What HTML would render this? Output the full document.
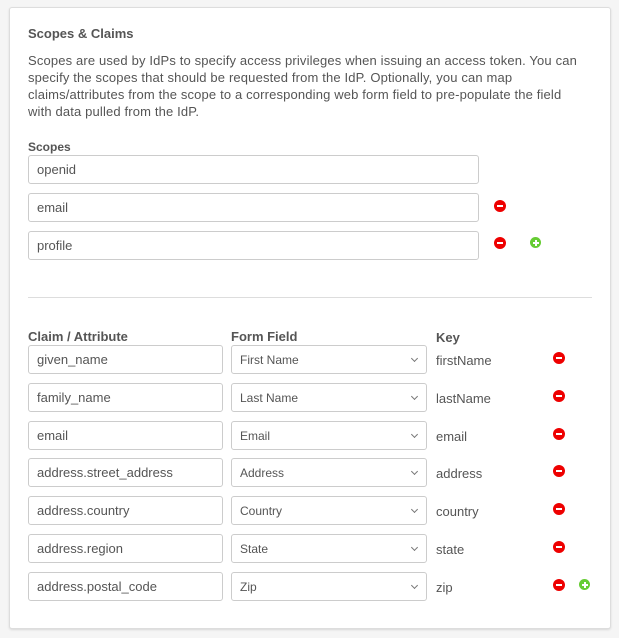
<!DOCTYPE html>
<html><head><style>
body{margin:0;width:619px;height:638px;background:#f5f5f5;font-family:"Liberation Sans",sans-serif;color:#555;position:relative;overflow:hidden}
.card{position:absolute;left:9px;top:7px;width:600px;height:620px;background:#fff;border:1px solid #ddd;border-radius:3px;box-shadow:0 1px 2px rgba(0,0,0,.12)}
.a{position:absolute}
.in{position:absolute;box-sizing:border-box;border:1px solid #ccc;border-radius:3px;height:29px;font-size:13px;line-height:27px;padding-left:8px;color:#555;background:#fff}
.sel{font-size:12px;line-height:28px}
.sel:after{content:"";position:absolute;right:9px;top:10px;width:4px;height:4px;border-right:1px solid #777;border-bottom:1px solid #777;transform:rotate(45deg)}
.h{font-weight:bold;font-size:13px;color:#555}
.m,.p{position:absolute;width:12px;height:12px;border-radius:50%}
.m{background:#e00}
.m:after{content:"";position:absolute;left:3px;top:5px;width:6px;height:2px;background:#fff}
.p{background:#6c3;width:11px;height:11px}
.p:before{content:"";position:absolute;left:2.5px;top:4.5px;width:6px;height:2px;background:#fff}
.p:after{content:"";position:absolute;left:4.5px;top:2.5px;width:2px;height:6px;background:#fff}
.k{position:absolute;left:436px;font-size:13px;margin-top:2px}
</style></head><body>
<div class="card"></div>
<div class="a h" style="left:28px;top:26px;font-size:13px">Scopes &amp; Claims</div>
<div class="a" style="left:28px;top:52px;width:590px;font-size:13px;line-height:17px;white-space:nowrap;letter-spacing:0.15px">Scopes are used by IdPs to specify access privileges when issuing an access token. You can<br>specify the scopes that should be requested from the IdP. Optionally, you can map<br>claims/attributes from the scope to a corresponding web form field to pre-populate the field<br>with data pulled from the IdP.</div>
<div class="a h" style="left:28px;top:140px;font-size:12px">Scopes</div>
<div class="in" style="left:28px;top:155px;width:451px">openid</div>
<div class="in" style="left:28px;top:193px;width:451px">email</div>
<div class="in" style="left:28px;top:231px;width:451px">profile</div>
<div class="m" style="left:494px;top:200px"></div>
<div class="m" style="left:494px;top:237px"></div>
<div class="p" style="left:530px;top:237px"></div>
<div class="a" style="left:28px;top:297px;width:564px;height:1px;background:#ddd"></div>
<div class="a h" style="left:28px;top:329px">Claim / Attribute</div>
<div class="a h" style="left:231px;top:329px">Form Field</div>
<div class="a h" style="left:436px;top:330px">Key</div>

<div class="in" style="left:28px;top:345px;width:195px">given_name</div>
<div class="in sel" style="left:231px;top:345px;width:196px">First Name</div>
<div class="k" style="top:351px">firstName</div>
<div class="m" style="left:553px;top:352px"></div>

<div class="in" style="left:28px;top:383px;width:195px">family_name</div>
<div class="in sel" style="left:231px;top:383px;width:196px">Last Name</div>
<div class="k" style="top:389px">lastName</div>
<div class="m" style="left:553px;top:390px"></div>

<div class="in" style="left:28px;top:421px;width:195px">email</div>
<div class="in sel" style="left:231px;top:421px;width:196px">Email</div>
<div class="k" style="top:427px">email</div>
<div class="m" style="left:553px;top:428px"></div>

<div class="in" style="left:28px;top:458px;width:195px">address.street_address</div>
<div class="in sel" style="left:231px;top:458px;width:196px">Address</div>
<div class="k" style="top:464px">address</div>
<div class="m" style="left:553px;top:465px"></div>

<div class="in" style="left:28px;top:496px;width:195px">address.country</div>
<div class="in sel" style="left:231px;top:496px;width:196px">Country</div>
<div class="k" style="top:502px">country</div>
<div class="m" style="left:553px;top:503px"></div>

<div class="in" style="left:28px;top:534px;width:195px">address.region</div>
<div class="in sel" style="left:231px;top:534px;width:196px">State</div>
<div class="k" style="top:540px">state</div>
<div class="m" style="left:553px;top:541px"></div>

<div class="in" style="left:28px;top:572px;width:195px">address.postal_code</div>
<div class="in sel" style="left:231px;top:572px;width:196px">Zip</div>
<div class="k" style="top:578px">zip</div>
<div class="m" style="left:553px;top:579px"></div>
<div class="p" style="left:579px;top:579px"></div>
</body></html>
